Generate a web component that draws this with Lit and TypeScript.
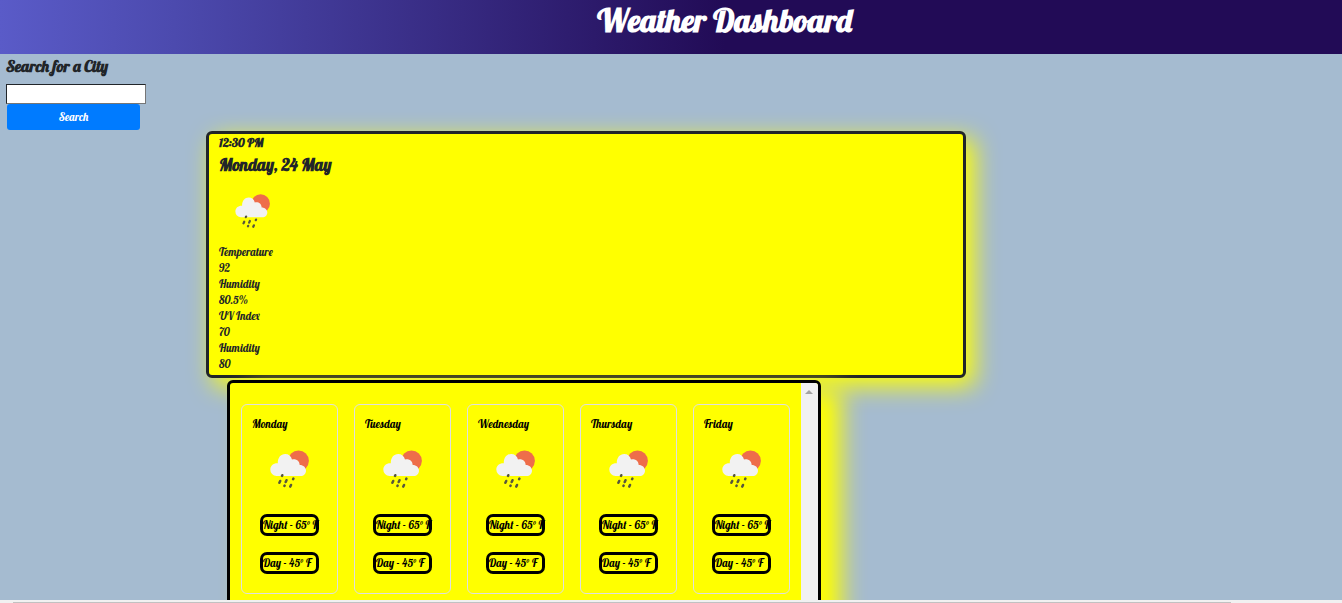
import { LitElement, html, css } from "lit";
import { customElement, property } from "lit/decorators.js";

@customElement("weather-icon")
class WeatherIcon extends LitElement {
  static styles = css`
    :host { display: block; }
    svg { display: block; width: 100%; height: 100%; }
    .sun { fill: #ee6d4a; }
    .cloud { fill: #f2f2f2; }
    .rain { stroke: #57573c; stroke-width: 2.5; stroke-linecap: round; }
  `;
  render() {
    return html`<svg viewBox="8 8 40 38" role="img" aria-label="Rain with some sun">
      <circle class="sun" cx="36.5" cy="18.8" r="10.4" />
      <path class="cloud" d="M14.5 34A6.4 6.4 0 0 1 8.3 27.5C8.3 23.6 11.6 20.9 15.8 21.2C15.6 15.8 18.7 12 23.2 12C26.6 12 29.2 14 30 17.6C33.6 16.5 37.5 18.6 37.7 23.1C41.3 23.1 44 25.5 44 28.7C44 31.7 41.7 34 38.5 34Z" />
      <g class="rain">
        <path d="M20.3 33.2L20 33.9M18.2 39L17.4 40.8M24.5 38.2L23.7 40M22.6 43.6L22.4 44M31.4 36.6L31.1 37.2M29 43L28.3 44.6" />
      </g>
    </svg>`;
  }
}

@customElement("day-card")
class DayCard extends LitElement {
  @property() day = "";
  static styles = css`
    :host {
      display: block;
      box-sizing: border-box;
      min-width: 0;
      height: 190px;
      padding: 10px;
      border: 1px solid #dfdfdf;
      border-radius: 6px;
    }
    .name { margin: 0 0 17px; font-size: 11px; line-height: 18px; font-weight: 400; }
    weather-icon { width: 40px; height: 38px; margin: 0 18px 26px; }
    .temp {
      box-sizing: border-box;
      width: 59px;
      height: 22px;
      margin: 0 8px 16px;
      border: 3px solid #000;
      border-radius: 7px;
      line-height: 16px;
      font-size: 11px;
      white-space: nowrap;
    }
  `;
  render() {
    return html`
      <h3 class="name">${this.day}</h3>
      <weather-icon></weather-icon>
      <div class="temp">Night - 65° F</div>
      <div class="temp">Day - 45° F</div>
    `;
  }
}

@customElement("app-root")
class AppRoot extends LitElement {
  static styles = css`
    :host {
      display: flex;
      flex-direction: column;
      height: 100vh;
      overflow: hidden;
      background: #a5bbd0;
      color: #212529;
      font-family: Lobster, "Liberation Serif", serif;
    }
    header {
      flex: none;
      box-sizing: border-box;
      height: 54px;
      padding-left: 8%;
      background: linear-gradient(90deg, #5a5bc8 0%, #4c4aae 13%, #220b56 54%);
      color: #fff;
      text-align: center;
    }
    h1 { margin: 0; font-size: 32px; line-height: 40px; font-weight: 700; }
    main {
      flex: 1;
      min-height: 0;
      display: grid;
      grid-template-columns: 200px minmax(0, 1fr);
      padding-left: 6px;
      overflow: hidden;
    }
    .search { display: flex; flex-direction: column; align-items: flex-start; }
    .search label { font-size: 16px; line-height: 24px; font-weight: 700; }
    .search input {
      box-sizing: border-box;
      width: 140px;
      height: 20px;
      margin-top: 6px;
      border: 1px solid;
      border-color: #212529 #767676 #767676 #212529;
      background: #fff;
    }
    .search button {
      width: 133px;
      height: 26px;
      margin-left: 1px;
      padding: 0;
      border: 0;
      border-radius: 3px;
      background: #007bff;
      color: #fff;
      font: inherit;
      font-size: 11px;
    }
    .results { padding-top: 77px; }
    .today {
      box-sizing: border-box;
      width: 760px;
      max-width: 100%;
      height: 247px;
      padding: 0 10px;
      border: 3px solid #212529;
      border-radius: 6px;
      background: #ff0;
      box-shadow: 8px 8px 24px #ff0;
    }
    .time { font-size: 12px; line-height: 18px; font-weight: 700; }
    h2 { margin: 0; font-size: 17px; line-height: 26px; font-weight: 700; }
    .today weather-icon { width: 36px; height: 34px; margin: 16px; }
    dl { margin: 0; font-size: 11px; line-height: 16px; }
    dd { margin: 0; }
    .forecast {
      display: flex;
      box-sizing: border-box;
      width: 594px;
      max-width: calc(100% - 21px);
      height: 260px;
      margin: 2px 0 0 21px;
      border: 3px solid #000;
      border-radius: 6px;
      background: #ff0;
      color: #000;
      box-shadow: 20px 8px 24px #ff0;
      overflow: hidden;
    }
    .days {
      flex: 1;
      display: grid;
      grid-template-columns: repeat(5, minmax(0, 1fr));
      gap: 16px;
      padding: 21px 11px 0;
    }
    .rail { width: 17px; background: #f1f1f1; }
    .rail svg { display: block; }
    .track { flex: none; height: 3px; padding: 0 111px 0 13px; background: #f1f1f1; }
    .thumb { height: 1px; border-top: 2px solid #f1f1f1; background: #c1c1c1; }
  `;

  private stats = [
    ["Temperature", "92"],
    ["Humidity", "80.5%"],
    ["UV Index", "70"],
    ["Humidity", "80"],
  ];
  private days = ["Monday", "Tuesday", "Wednesday", "Thursday", "Friday"];

  render() {
    return html`
      <header><h1>Weather Dashboard</h1></header>
      <main>
        <form class="search" @submit=${(e: Event) => e.preventDefault()}>
          <label for="city">Search for a City</label>
          <input id="city" type="text" />
          <button type="submit">Search</button>
        </form>
        <div class="results">
          <section class="today">
            <div class="time">12:30 PM</div>
            <h2>Monday, 24 May</h2>
            <weather-icon></weather-icon>
            <dl>${this.stats.map(([k, v]) => html`<dt>${k}</dt><dd>${v}</dd>`)}</dl>
          </section>
          <section class="forecast">
            <div class="days">${this.days.map((d) => html`<day-card .day=${d}></day-card>`)}</div>
            <div class="rail">
              <svg width="17" height="17" viewBox="0 0 17 17"><path d="M4 11L8 7L12 11Z" fill="#a3a3a3" /></svg>
            </div>
          </section>
        </div>
      </main>
      <div class="track"><div class="thumb"></div></div>
    `;
  }
}
